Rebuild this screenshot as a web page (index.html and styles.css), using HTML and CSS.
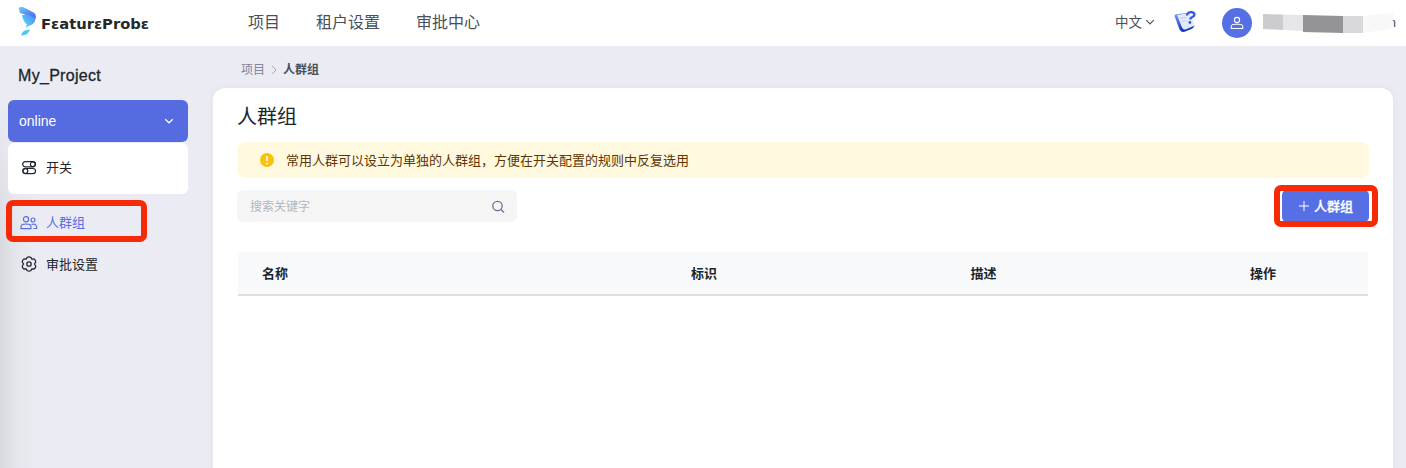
FILE: index.html
```html
<!DOCTYPE html>
<html lang="zh-CN">
<head>
<meta charset="utf-8">
<title>FeatureProbe</title>
<link rel="stylesheet" href="styles.css">
</head>
<body>
<header class="topbar">
  <div class="brand">
    <svg class="brand-mark" width="20" height="30" viewBox="0 0 20 30">
      <defs>
        <linearGradient id="g1" x1="0" y1="0" x2="1" y2="1"><stop offset="0" stop-color="#6bd4fb"/><stop offset=".5" stop-color="#5a8ff2"/><stop offset="1" stop-color="#4d6ae6"/></linearGradient>
        <linearGradient id="g2" x1="1" y1="0" x2="0" y2="1"><stop offset="0" stop-color="#4f86f0"/><stop offset="1" stop-color="#5be0fb"/></linearGradient>
      </defs>
      <path d="M.5 2L3 .8L5.500 1.200L16 6.800Q17.800 8 17.800 10V13L9 9L2 7Z" fill="url(#g1)"/>
      <path d="M4 9.500L8 8L17.600 12.500Q17.500 16 14.500 18.200L7.500 21.800L9 18.500Q5.500 16 4 9.500Z" fill="url(#g2)"/>
      <path d="M3.300 29.500C3.500 26.500 6 23.500 12.300 23.800C10.500 26 9.500 29.700 3.300 29.500Z" fill="#4acbf2"/>
    </svg>
    <svg class="brand-name" width="110" height="22" viewBox="0 0 110 22"><text x="1" y="17" textLength="108" lengthAdjust="spacingAndGlyphs">FɛaturɛProbɛ</text></svg>
  </div>
  <nav class="main-nav"><a>项目</a><a>租户设置</a><a>审批中心</a></nav>
  <div class="tools">
    <span class="lang">中文</span>
    <svg class="lang-arrow" width="10" height="10" viewBox="0 0 10 10"><path d="M1.200 3.200L5 7L8.800 3.200" fill="none" stroke="#4a5158" stroke-width="1.100"/></svg>
    <svg class="help" width="24" height="24" viewBox="0 0 24 24">
      <defs><linearGradient id="g3" x1="0" y1="0" x2="1" y2="1"><stop offset="0" stop-color="#7f9bf0"/><stop offset=".6" stop-color="#1e3fc0"/><stop offset="1" stop-color="#102f9e"/></linearGradient></defs>
      <path d="M.5 6Q.5 4.500 2.500 4.200L14 3L20.500 16L18.500 18.500L10 22Q7 22.500 5.500 19.500Z" fill="url(#g3)"/>
      <path d="M3 5L16 3L21 15.500L11.500 19.500Q9 20 7.800 17Z" fill="#e1eafd"/>
      <path d="M6 8.500L12 7.500M7.500 11.500L12 10.700" stroke="#b3c5f3" stroke-width=".8"/>
      <path d="M13.200 5.500C12.500 1.500 20.500 1 20.500 4.500C20.500 7.300 16.200 6.700 16.200 9.500" fill="none" stroke="#3158e5" stroke-width="2.300"/><circle cx="15.900" cy="12.500" r="1.400" fill="#3158e5"/>
    </svg>
    <span class="avatar"><svg width="14" height="14" viewBox="0 0 14 14" fill="none" stroke="#fff" stroke-width="1.100"><circle cx="7" cy="4" r="2.600"/><path d="M1.200 12.500C.5 7.500 4 8.200 7 8.200S13.500 7.500 12.800 12.500Z" stroke-linejoin="round"/></svg></span>
    <span class="account"><svg width="136" height="22" viewBox="0 0 136 22"><path d="M3 3L23 3.500V19L3 18Z" fill="#ccccce"/><path d="M23 3.500L43 4V20L23 19Z" fill="#e5e6e7"/><path d="M43 4L83 5V22L43 21Z" fill="#949496"/><path d="M83 5H103V22H83Z" fill="#d9d9db"/><path d="M103 5L118 3L133 2V17L128 19L115 20L103 22Z" fill="#f8f8f8"/></svg><span>n</span></span>
  </div>
</header>
<div class="layout">
  <aside class="sidebar">
    <h2 class="project">My_Project</h2>
    <div class="env"><span>online</span><svg width="10" height="10" viewBox="0 0 10 10"><path d="M1.200 3.200L5 6.800L8.800 3.200" fill="none" stroke="#fff" stroke-width="1.200"/></svg></div>
    <a class="side-item switches"><svg width="16" height="16" viewBox="0 0 16 16" fill="none" stroke="#222831" stroke-width="1.200"><rect x="1.700" y="1.700" width="12.800" height="5.200" rx="2.600"/><rect x="1.700" y="8.500" width="12.800" height="5.200" rx="2.600"/><circle cx="11.800" cy="4.300" r="2.400"/><circle cx="4.400" cy="11.100" r="2.400"/></svg>开关</a>
    <a class="side-item current marked"><svg width="18" height="16" viewBox="0 0 18 16" fill="none" stroke="#566fe5" stroke-width="1.200"><circle cx="6" cy="4.300" r="2.600"/><circle cx="13" cy="5" r="2"/><path d="M1 13.700C.5 9 3 9 6 9S11.500 9 11 13.700Z" stroke-linejoin="round"/><path d="M11.500 9.500C15 8.500 17 9.500 16.700 13.500H13.500"/></svg>人群组</a>
    <a class="side-item settings"><svg width="16" height="16" viewBox="0 0 16 16" fill="none" stroke="#222831" stroke-width="1.300"><path d="M6 1.500Q8 .2 10 1.500L10.700 3.100L13.100 3Q14.800 4 14.700 6L13.500 8L14.700 10Q14.800 12 13.100 13L10.700 12.900L10 14.500Q8 15.800 6 14.500L5.300 12.900L2.900 13Q1.200 12 1.300 10L2.500 8L1.300 6Q1.200 4 2.900 3L5.300 3.100Z" stroke-linejoin="round"/><circle cx="8" cy="8" r="2.200"/></svg><span>审批设置</span></a>
  </aside>
  <main class="main">
    <div class="crumbs"><span>项目</span><svg width="8" height="10" viewBox="0 0 8 10"><path d="M2 .8L6 5L2 9.200" fill="none" stroke="#a5a6b5"/></svg><b>人群组</b></div>
    <section class="panel">
      <h1>人群组</h1>
      <div class="notice"><svg width="14" height="14" viewBox="0 0 14 14"><circle cx="7" cy="7" r="7" fill="#fac20a"/><path d="M7 3V8" stroke="#fff" stroke-width="1.500"/><circle cx="7" cy="10.500" r=".9" fill="#fff"/></svg><span>常用人群可以设立为单独的人群组，方便在开关配置的规则中反复选用</span></div>
      <div class="actions">
        <div class="search"><span>搜索关键字</span><svg width="14" height="14" viewBox="0 0 14 14" fill="none" stroke="#69718f" stroke-width="1.300"><circle cx="6.500" cy="6" r="4.700"/><path d="M10 9.500L13 12.500"/></svg></div>
        <button class="create"><svg width="12" height="12" viewBox="0 0 12 12"><path d="M1 6H11M6 1V11" stroke="#fff"/></svg><span>人群组</span></button>
      </div>
      <div class="table-head"><span>名称</span><span>标识</span><span>描述</span><span>操作</span></div>
    </section>
  </main>
</div>
</body>
</html>
```
FILE: styles.css
```css
* { box-sizing: border-box; }
body { margin: 0; height: 468px; overflow: hidden; background: #ebebf4; color: #212529; font: 13px/20px "Liberation Sans", "Noto Sans CJK SC", sans-serif; }
svg { display: block; flex: none; }
.topbar { height: 46px; background: #fff; display: flex; align-items: center; padding-left: 18px; }
.brand { width: 230px; display: flex; align-items: center; }
.brand-mark { margin: -4px 2px 0 0; }
.brand-name text { font: bold 13.5px "DejaVu Sans", sans-serif; fill: #25272a; }
.main-nav { display: flex; gap: 36px; font-size: 16px; line-height: 24px; color: #495057; }
.tools { margin-left: auto; display: flex; align-items: center; padding-right: 10px; }
.lang { font-size: 13.5px; color: #495057; margin-top: -1px; }
.lang-arrow { margin-left: 3px; margin-top: -2px; }
.help { margin: -2px 0 0 19px; }
.avatar { width: 30px; height: 30px; margin-left: 24px; border-radius: 50%; background: #566fe5; display: grid; place-items: center; }
.account { width: 136px; height: 24px; margin-left: 8px; position: relative; color: #495057; display: flex; align-items: center; justify-content: flex-end; }
.account svg { position: absolute; left: 0; top: 0; }
.account span { clip-path: inset(0 0 0 4px); }
.layout { display: flex; height: 422px; }
.sidebar { width: 213px; padding: 20px 25px 0 8px; background: linear-gradient(#ebebf4 50px, #ebebf400 200px), linear-gradient(90deg, #d9dae0 0, #e6e7ed 18px, #ebebf4 40px); }
.project { margin: 0 0 14px 10px; font-size: 16px; line-height: 20px; font-weight: 400; letter-spacing: .3px; -webkit-text-stroke: .3px #212529; }
.env { height: 42px; border-radius: 6px; background: #556bdf; color: #fff; font-size: 14px; display: flex; align-items: center; justify-content: space-between; padding: 0 14px 0 11px; }
.side-item { display: flex; align-items: center; gap: 9px; }
.switches { height: 51px; margin-top: 1px; padding: 0 0 1px 13px; background: #fff; border-radius: 6px; }
.marked { width: 141px; height: 42px; margin: 6px 0 0 -2px; border: 6px solid #f72a08; border-radius: 7px; padding: 3px 0 0 8px; gap: 8px; }
.current { color: #566fe5; }
.settings { height: 40px; margin-top: 2px; padding-left: 13px; }
.settings span { padding-top: 2px; }
.main { width: 1180px; }
.crumbs { height: 42px; padding: 6px 0 0 28px; display: flex; align-items: center; gap: 5px; font-size: 12px; color: #84849c; }
.crumbs b { color: #495057; }
.panel { height: 400px; background: #fff; border-radius: 12px; padding: 15px 24px 0; box-shadow: 0 0 6px #dedfe9; }
h1 { margin: 0; font-size: 20px; line-height: 28px; font-weight: 400; }
.notice { height: 36px; margin-top: 11px; padding-left: 23px; display: flex; align-items: center; gap: 12px; background: #fff9e0; border-radius: 8px; color: #613400; }
.notice span { padding-top: 2px; }
.actions { margin-top: 8px; height: 43px; display: flex; justify-content: space-between; align-items: flex-start; }
.search { width: 280px; height: 32px; margin-top: 4px; padding: 1px 12px 0 13px; background: #f5f5f5; border-radius: 6px; display: flex; align-items: center; justify-content: space-between; font-size: 12px; color: #b2b7bf; }
.search span { padding-top: 1px; }
.create { width: 87px; height: 32px; margin-top: 4px; padding: 0; border: 0; border-radius: 5px; background: #566fe5; color: #fff; font: 500 13px/20px "Liberation Sans", "Noto Sans CJK SC", sans-serif; -webkit-text-stroke: .3px #fff; display: flex; align-items: center; justify-content: center; gap: 4px; position: relative; }
.create span { padding-top: 2px; }
.create::after { content: ""; box-sizing: border-box; position: absolute; left: -8px; top: -5px; width: 104px; height: 42px; border: 6px solid #f72a08; border-radius: 7px; }
.table-head { height: 44px; margin: 23px 1px 0; border-bottom: 2px solid #dedfe1; border-radius: 4px 4px 0 0; background: #f8f9fb; display: grid; grid-template-columns: 429px 279.5px 279.5px 1fr; align-items: center; padding: 1px 0 0 24px; font-weight: 700; }
```
